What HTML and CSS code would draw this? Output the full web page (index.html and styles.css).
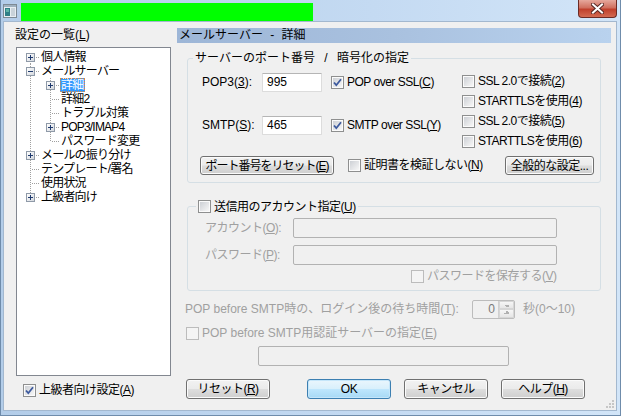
FILE: index.html
```html
<!DOCTYPE html>
<html lang="ja">
<head>
  <meta charset="UTF-8">
  <title>メールサーバー - 詳細</title>
  <link rel="stylesheet" href="styles.css">
</head>
<body>

  <div class="window">
    <div class="titlebar">
      <svg class="app-icon" width="14" height="14" viewBox="0 0 14 14">
        <rect x="0.5" y="0.5" width="13" height="13" fill="#e8eef2" stroke="#7d8a94"/>
        <rect x="1" y="1" width="12" height="2" fill="#9fb1bf"/>
        <rect x="2" y="4" width="5" height="8" fill="#2f7f86"/>
        <rect x="3" y="5" width="3" height="3" fill="#5db3a6"/>
        <rect x="8" y="4" width="4" height="8" fill="#c9d3da"/>
      </svg>
      <span class="title-mask"></span>
      <span class="close-btn">
        <svg width="13" height="11" viewBox="0 0 13 11">
          <path d="M2 1.5 L11 9.5 M11 1.5 L2 9.5" stroke="#5a2a26" stroke-width="4" stroke-linecap="square"/>
          <path d="M2 1.5 L11 9.5 M11 1.5 L2 9.5" stroke="#ffffff" stroke-width="2" stroke-linecap="square"/>
        </svg>
      </span>
    </div>

    <div class="client">
      <!-- left: list of settings -->
      <div class="side">
        <div class="side-label">設定の一覧(<u>L</u>)</div>
        <div class="tree">
          <div class="node"><span class="cell first"><span class="exp plus"></span></span><span class="text">個人情報</span></div>
          <div class="node"><span class="cell tee"><span class="exp minus"></span></span><span class="text">メールサーバー</span></div>
          <div class="node"><span class="cell pass"></span><span class="cell tee"><span class="exp plus"></span></span><span class="text selected">詳細</span></div>
          <div class="node"><span class="cell pass"></span><span class="cell tee"></span><span class="text">詳細2</span></div>
          <div class="node"><span class="cell pass"></span><span class="cell tee"></span><span class="text">トラブル対策</span></div>
          <div class="node"><span class="cell pass"></span><span class="cell tee"><span class="exp plus"></span></span><span class="text">POP3/IMAP4</span></div>
          <div class="node"><span class="cell pass"></span><span class="cell last"></span><span class="text">パスワード変更</span></div>
          <div class="node"><span class="cell tee"><span class="exp plus"></span></span><span class="text">メールの振り分け</span></div>
          <div class="node"><span class="cell tee"></span><span class="text">テンプレート/署名</span></div>
          <div class="node"><span class="cell tee"></span><span class="text">使用状況</span></div>
          <div class="node"><span class="cell last"><span class="exp plus"></span></span><span class="text">上級者向け</span></div>
        </div>
        <label class="check side-check"><span class="cb on"><svg width="11" height="11" viewBox="0 0 11 11"><path d="M2 5.5 L4.3 8.2 L9 2.2" fill="none" stroke="#3d5a9e" stroke-width="1.8"/></svg></span>上級者向け設定(<u>A</u>)</label>
      </div>

      <!-- right: page -->
      <div class="main">
        <div class="page-title">メールサーバー - 詳細</div>

        <fieldset class="group ports">
          <legend>サーバーのポート番号 / 暗号化の指定</legend>
          <div class="port-grid">
            <div class="port-left">
              <div class="port-row">
                <span class="port-label">POP3(<u>3</u>):</span>
                <span class="field port-field">995</span>
                <label class="check"><span class="cb on"><svg width="11" height="11" viewBox="0 0 11 11"><path d="M2 5.5 L4.3 8.2 L9 2.2" fill="none" stroke="#3d5a9e" stroke-width="1.8"/></svg></span>POP over SSL(<u>C</u>)</label>
              </div>
              <div class="port-row">
                <span class="port-label">SMTP(<u>S</u>):</span>
                <span class="field port-field">465</span>
                <label class="check"><span class="cb on"><svg width="11" height="11" viewBox="0 0 11 11"><path d="M2 5.5 L4.3 8.2 L9 2.2" fill="none" stroke="#3d5a9e" stroke-width="1.8"/></svg></span>SMTP over SSL(<u>Y</u>)</label>
              </div>
            </div>
            <div class="port-right">
              <label class="check"><span class="cb"></span>SSL 2.0で接続(<u>2</u>)</label>
              <label class="check"><span class="cb"></span>STARTTLSを使用(<u>4</u>)</label>
              <label class="check"><span class="cb"></span>SSL 2.0で接続(<u>5</u>)</label>
              <label class="check"><span class="cb"></span>STARTTLSを使用(<u>6</u>)</label>
            </div>
          </div>
          <div class="port-actions">
            <button class="btn reset-ports">ポート番号をリセット(<u>E</u>)</button>
            <label class="check verify"><span class="cb"></span>証明書を検証しない(<u>N</u>)</label>
            <button class="btn general">全般的な設定...</button>
          </div>
        </fieldset>

        <fieldset class="group account">
          <legend><label class="check"><span class="cb"></span>送信用のアカウント指定(<u>U</u>)</label></legend>
          <div class="acc-row">
            <span class="acc-label">アカウント(<u>O</u>):</span>
            <span class="field off acc-field"></span>
          </div>
          <div class="acc-row">
            <span class="acc-label">パスワード(<u>P</u>):</span>
            <span class="field off acc-field"></span>
          </div>
          <label class="check off save-pass"><span class="cb"></span>パスワードを保存する(<u>V</u>)</label>
        </fieldset>

        <div class="wait-row off">
          <span class="wait-label">POP before SMTP時の、ログイン後の待ち時間(<u>T</u>):</span>
          <span class="spin">
            <span class="spin-value">0</span>
            <span class="spin-arrows"><span class="up"></span><span class="down"></span></span>
          </span>
          <span class="wait-unit">秒(0〜10)</span>
        </div>
        <label class="check off pbs-check"><span class="cb"></span>POP before SMTP用認証サーバーの指定(<u>E</u>)</label>
        <span class="field off pbs-field"></span>

        <div class="buttons">
          <button class="btn">リセット(<u>R</u>)</button>
          <button class="btn default">OK</button>
          <button class="btn">キャンセル</button>
          <button class="btn">ヘルプ(<u>H</u>)</button>
        </div>
      </div>

      <svg class="grip" width="8" height="8" viewBox="0 0 8 8">
        <rect x="6" y="0" width="2" height="2" fill="#c6c6c6"/>
        <rect x="3" y="3" width="2" height="2" fill="#c6c6c6"/>
        <rect x="6" y="3" width="2" height="2" fill="#c6c6c6"/>
        <rect x="0" y="6" width="2" height="2" fill="#c6c6c6"/>
        <rect x="3" y="6" width="2" height="2" fill="#c6c6c6"/>
        <rect x="6" y="6" width="2" height="2" fill="#c6c6c6"/>
      </svg>
    </div>
  </div>

</body>
</html>
```

FILE: styles.css
```css
body {
  margin: 0;
  font-family: "Liberation Sans", "Noto Sans CJK JP", sans-serif;
  font-size: 12px;
  line-height: 15px;
  color: #000;
  background: #fff;
}

u {
  text-decoration: underline;
  text-underline-offset: 1px;
}

.window {
  width: 621px;
  height: 416px;
  box-sizing: border-box;
  border: 1px solid #6f8cab;
  border-top: none;
  background: linear-gradient(to right, #b3cde9, #c4daf2 60%, #d2e5f8);
}

/* title bar */
.titlebar {
  height: 21px;
  display: flex;
  align-items: flex-start;
}

.app-icon {
  margin: 4px 0 0 2px;
}

.title-mask {
  width: 292px;
  height: 18px;
  margin: 3px 0 0 4px;
  background: #00ff00;
}

.close-btn {
  margin-left: auto;
  margin-right: 3px;
  width: 39px;
  height: 18px;
  box-sizing: border-box;
  border: 1px solid #6b2b25;
  border-top: none;
  border-radius: 0 0 4px 4px;
  background: linear-gradient(#e6a89c, #d0705f 45%, #c0402c 55%, #d36a52);
  display: flex;
  align-items: center;
  justify-content: center;
}

/* client area */
.client {
  position: relative;
  margin-left: 2px;
  width: 614px;
  height: 390px;
  box-sizing: border-box;
  border: 1px solid #a3b8cf;
  background: #f0f0f0;
  display: flex;
}

.side {
  width: 173px;
}

.side-label {
  margin: 6px 0 0 11px;
  height: 15px;
}

.tree {
  margin: 4px 0 0 12px;
  width: 155px;
  height: 329px;
  box-sizing: border-box;
  border: 1px solid #828790;
  background: #fff;
  padding: 2px 0 0 3px;
}

.node {
  display: flex;
  height: 14px;
  line-height: 14px;
  white-space: nowrap;
}

.cell {
  width: 20px;
  height: 14px;
  flex: none;
  display: flex;
  align-items: flex-start;
}

.cell.pass {
  background: repeating-linear-gradient(#a0a0a0 0 1px, transparent 1px 2px) 10px 0 / 1px 14px no-repeat;
}

.cell.tee {
  background:
    repeating-linear-gradient(#a0a0a0 0 1px, transparent 1px 2px) 10px 0 / 1px 14px no-repeat,
    repeating-linear-gradient(to right, #a0a0a0 0 1px, transparent 1px 2px) 12px 7px / 8px 1px no-repeat;
}

.cell.first {
  background:
    repeating-linear-gradient(#a0a0a0 0 1px, transparent 1px 2px) 10px 7px / 1px 7px no-repeat,
    repeating-linear-gradient(to right, #a0a0a0 0 1px, transparent 1px 2px) 12px 7px / 8px 1px no-repeat;
}

.cell.last {
  background:
    repeating-linear-gradient(#a0a0a0 0 1px, transparent 1px 2px) 10px 0 / 1px 8px no-repeat,
    repeating-linear-gradient(to right, #a0a0a0 0 1px, transparent 1px 2px) 12px 7px / 8px 1px no-repeat;
}

.exp {
  width: 9px;
  height: 9px;
  box-sizing: border-box;
  margin: 3px 0 0 6px;
  border: 1px solid #8f9aa8;
}

.exp.plus {
  background:
    linear-gradient(#1f3a6e, #1f3a6e) center / 5px 1px no-repeat,
    linear-gradient(#1f3a6e, #1f3a6e) center / 1px 5px no-repeat,
    linear-gradient(135deg, #ffffff, #d4d8de);
}

.exp.minus {
  background:
    linear-gradient(#1f3a6e, #1f3a6e) center / 5px 1px no-repeat,
    linear-gradient(135deg, #ffffff, #d4d8de);
}

.text {
  padding: 0 1px;
  height: 14px;
  box-sizing: border-box;
  letter-spacing: -0.8px;
}

.text.selected {
  background: #3399ff;
  color: #fff;
  padding-right: 2px;
  outline: 1px dotted #e08a3c;
  outline-offset: -1px;
}

.side-check {
  margin: 7px 0 0 19px;
}

/* checkboxes */
.check {
  display: flex;
  align-items: center;
  height: 15px;
  white-space: nowrap;
  letter-spacing: -0.5px;
}

.cb {
  width: 13px;
  height: 13px;
  flex: none;
  box-sizing: border-box;
  margin-right: 3px;
  border: 1px solid #8e8f8f;
  padding: 1px;
  background: linear-gradient(135deg, #cdd0d5, #f7f7f7) content-box, #fbfbfb;
  display: flex;
}

.cb svg {
  margin: -1px;
}

.off {
  color: #a0a0a0;
}

.off .cb {
  border-color: #bcbcbc;
  background: #f4f4f4;
}

/* right page */
.main {
  width: 434px;
}

.page-title {
  margin-top: 6px;
  height: 15px;
  padding-left: 2px;
  word-spacing: 4px;
  background: linear-gradient(to right, #9db6d7, #a9c1df 50%, #b9d2ee);
}

.group {
  margin: 0 0 0 10px;
  width: 414px;
  box-sizing: border-box;
  border: 1px solid #d5dfe5;
  border-radius: 3px;
  min-inline-size: 0;
}

.group legend {
  padding: 0 2px;
  height: 14px;
  line-height: 14px;
}

.ports {
  margin-top: 8px;
  padding: 6px 6px 7px 12px;
}

.ports legend {
  margin-left: -7px;
  word-spacing: 6px;
}

.port-grid {
  display: flex;
}

.port-left {
  width: 262px;
  padding-top: 1px;
  display: flex;
  flex-direction: column;
  gap: 23px;
}

.port-row {
  display: flex;
  align-items: center;
  height: 20px;
}

.port-label {
  width: 60px;
  padding-left: 2px;
}

.port-row .check {
  margin-left: 9px;
}

.field {
  display: block;
  box-sizing: border-box;
  border: 1px solid #dcdcdc;
  border-top-color: #b5b5b5;
  background: #fff;
  border-radius: 1px;
}

.port-field {
  width: 60px;
  height: 19px;
  padding-left: 4px;
  line-height: 17px;
}

.field.off {
  background: #f0f0f0;
  border-color: #b2b2b2;
  border-radius: 2px;
}

.port-right {
  display: flex;
  flex-direction: column;
}

.port-right .check {
  height: 20px;
}

.port-actions {
  display: flex;
  align-items: center;
  margin-top: 5px;
}

.btn {
  height: 19px;
  box-sizing: border-box;
  padding: 0;
  border: 1px solid #707070;
  border-radius: 3px;
  background: linear-gradient(#f2f2f2, #ebebeb 48%, #dddddd 52%, #cfcfcf);
  box-shadow: inset 0 0 0 1px #fbfbfb;
  font: inherit;
  line-height: 16px;
  color: #000;
  white-space: nowrap;
  letter-spacing: -0.5px;
}

.btn.default {
  border-color: #3c7fb1;
  background: linear-gradient(#eaf6fd, #d9f0fc 48%, #bee6fd 52%, #a7d9f5);
  box-shadow: inset 0 0 0 1px #c5e6fa;
}

.reset-ports {
  width: 134px;
  letter-spacing: -1px;
}

.verify {
  margin-left: 14px;
}

.general {
  width: 89px;
  margin-left: auto;
}

.account {
  margin-top: 16px;
  padding: 5px 6px 6px 12px;
}

.account legend {
  margin-left: -4px;
}

.acc-row {
  display: flex;
  align-items: center;
  height: 20px;
  margin-bottom: 7px;
  color: #a0a0a0;
}

.acc-label {
  width: 88px;
  padding-left: 5px;
  letter-spacing: -0.5px;
}

.acc-field {
  width: 264px;
  height: 20px;
}

.save-pass {
  margin: -3px 0 0 211px;
}

.wait-row {
  display: flex;
  align-items: center;
  height: 20px;
  margin: 8px 0 0 8px;
}

.wait-label {
  width: 287px;
}

.spin {
  display: flex;
  width: 43px;
  height: 19px;
  box-sizing: border-box;
  border: 1px solid #bcbcbc;
  border-radius: 2px;
  color: #7a7a7a;
}

.spin-value {
  flex: 1;
  text-align: right;
  padding-right: 3px;
  line-height: 17px;
}

.spin-arrows {
  width: 15px;
  display: flex;
  flex-direction: column;
  border-left: 1px solid #d0d0d0;
}

.spin-arrows span {
  flex: 1;
  background: linear-gradient(#f6f6f6, #e6e6e6);
  border: 1px solid #d6d6d6;
}

.spin-arrows .up {
  background:
    linear-gradient(to top right, transparent 50%, #b0b0b0 50%) 4px 3px / 3px 3px no-repeat,
    linear-gradient(to top left, transparent 50%, #b0b0b0 50%) 7px 3px / 3px 3px no-repeat,
    linear-gradient(#f6f6f6, #e6e6e6);
}

.spin-arrows .down {
  background:
    linear-gradient(to bottom right, transparent 50%, #b0b0b0 50%) 4px 1px / 3px 3px no-repeat,
    linear-gradient(to bottom left, transparent 50%, #b0b0b0 50%) 7px 1px / 3px 3px no-repeat,
    linear-gradient(#f6f6f6, #e6e6e6);
}

.wait-unit {
  margin-left: 8px;
}

.pbs-check {
  margin: 6px 0 0 9px;
  height: 16px;
  letter-spacing: 0;
}

.pbs-field {
  margin: 5px 0 0 81px;
  width: 251px;
  height: 20px;
}

.buttons {
  display: flex;
  margin: 13px 0 0 9px;
}

.buttons .btn {
  width: 84px;
  height: 20px;
  margin-right: 13px;
}

.buttons .btn:first-child {
  margin-right: 37px;
}

.grip {
  position: absolute;
  right: 2px;
  bottom: 2px;
}
```
